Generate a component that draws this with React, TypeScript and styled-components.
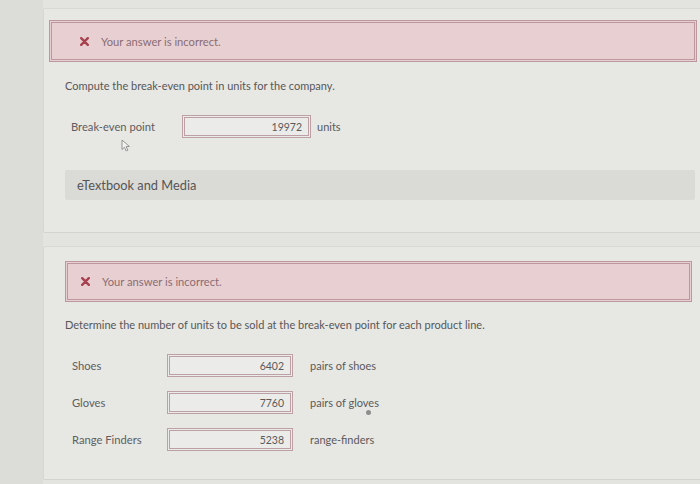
import React from "react";
import styled, { createGlobalStyle } from "styled-components";

const Global = createGlobalStyle`
  html, body { margin: 0; padding: 0; }
  body {
    background: #dddddb;
    font-family: Lato, "Open Sans", Arial, sans-serif;
    color: #585858;
    width: 700px;
    height: 484px;
    overflow: hidden;
  }
`;

const Page = styled.div`
  display: flex;
  width: 700px;
  height: 484px;
`;

const Gutter = styled.div`
  width: 43px;
  flex: none;
  background: #dcdcd9;
`;

const Main = styled.div`
  flex: 1;
  display: flex;
  flex-direction: column;
  padding-top: 8px;
  gap: 13px;
  background: #e3e3e0;
`;

const Panel = styled.section<{ $h: number }>`
  position: relative;
  height: ${(p) => p.$h}px;
  box-sizing: border-box;
  background: #e7e7e4;
  border-top: 1px solid #d8d8d4;
  border-bottom: 1px solid #d3d3cf;
  border-left: 1px solid #d6d6d2;
  border-radius: 2px 0 0 2px;
  display: flex;
  flex-direction: column;
`;

const ErrorBox = styled.div<{ $m: string; $h: number; $pl: number }>`
  margin: ${(p) => p.$m};
  height: ${(p) => p.$h}px;
  box-sizing: border-box;
  border: 3px double #bd979e;
  background: #e8d0d2;
  display: flex;
  align-items: center;
  padding-left: ${(p) => p.$pl}px;
  gap: 12px;
  font-size: 11.2px;
  color: #8b6c72;
`;

const XIcon = () => (
  <svg width="9" height="9" viewBox="0 0 9 9">
    <path d="M1.2 1.2 L7.8 7.8 M7.8 1.2 L1.2 7.8" stroke="#a8414f" strokeWidth="2.4" strokeLinecap="round" />
  </svg>
);

const Prompt = styled.p<{ $mt: number }>`
  margin: ${(p) => p.$mt}px 0 0 21px;
  font-size: 11px;
  line-height: 12px;
  color: #575757;
`;

const Fields = styled.div<{ $mt: number; $gap: number }>`
  margin-top: ${(p) => p.$mt}px;
  display: flex;
  flex-direction: column;
  gap: ${(p) => p.$gap}px;
`;

const Row = styled.div<{ $label: number; $ml: number; $sg: number }>`
  display: grid;
  grid-template-columns: ${(p) => p.$label}px auto auto;
  align-items: center;
  justify-content: start;
  margin-left: ${(p) => p.$ml}px;
  & > span:last-child {
    margin-left: ${(p) => p.$sg}px;
  }
`;

const Label = styled.span`
  font-size: 11.2px;
  color: #5e5e5e;
`;

const Input = styled.div<{ $w: number }>`
  width: ${(p) => p.$w}px;
  height: 23px;
  box-sizing: border-box;
  border: 3px double #bca0a5;
  background: #ebebe9;
  display: flex;
  align-items: center;
  justify-content: flex-end;
  padding-right: 6px;
  font-size: 10.5px;
  color: #5a5a5a;
`;

const Suffix = styled.span`
  font-size: 11px;
  color: #5a5a5a;
`;

const MediaBar = styled.div`
  margin: 32px 5px 0 21px;
  height: 30px;
  background: #dadad7;
  border-radius: 2px;
  display: flex;
  align-items: center;
  padding-left: 12px;
  font-size: 12.8px;
  color: #555;
`;

const Cursor = styled.svg`
  position: absolute;
  left: 77px;
  top: 130px;
`;

const Dot = styled.div`
  position: absolute;
  left: 322px;
  top: 163px;
  width: 5px;
  height: 5px;
  border-radius: 50%;
  background: #8e8e8e;
`;

export default function App() {
  return (
    <>
      <Global />
      <Page>
        <Gutter />
        <Main>
          <Panel $h={225}>
            <ErrorBox $m="11px 3px 0 5px" $h={42} $pl={28}>
              <XIcon />
              <span>Your answer is incorrect.</span>
            </ErrorBox>
            <Prompt $mt={18}>Compute the break-even point in units for the company.</Prompt>
            <Fields $mt={23} $gap={0}>
              <Row $label={111} $ml={27} $sg={6}>
                <Label>Break-even point</Label>
                <Input $w={129}>19972</Input>
                <Suffix>units</Suffix>
              </Row>
            </Fields>
            <Cursor width="11" height="13" viewBox="0 0 11 13">
              <path d="M1 1 L1 10.5 L3.4 8.3 L5.3 12 L6.9 11.2 L5.1 7.6 L8.4 7.4 Z" fill="#f2f2f0" stroke="#8a8a8a" strokeWidth="0.9" strokeLinejoin="round" />
            </Cursor>
            <MediaBar>eTextbook and Media</MediaBar>
          </Panel>
          <Panel $h={234}>
            <ErrorBox $m="14px 8px 0 21px" $h={41} $pl={13}>
              <XIcon />
              <span>Your answer is incorrect.</span>
            </ErrorBox>
            <Prompt $mt={17}>Determine the number of units to be sold at the break-even point for each product line.</Prompt>
            <Fields $mt={23} $gap={14}>
              <Row $label={95} $ml={28} $sg={17}>
                <Label>Shoes</Label>
                <Input $w={126}>6402</Input>
                <Suffix>pairs of shoes</Suffix>
              </Row>
              <Row $label={95} $ml={28} $sg={17}>
                <Label>Gloves</Label>
                <Input $w={126}>7760</Input>
                <Suffix>pairs of gloves</Suffix>
              </Row>
              <Row $label={95} $ml={28} $sg={17}>
                <Label>Range Finders</Label>
                <Input $w={126}>5238</Input>
                <Suffix>range-finders</Suffix>
              </Row>
            </Fields>
            <Dot />
          </Panel>
        </Main>
      </Page>
    </>
  );
}
